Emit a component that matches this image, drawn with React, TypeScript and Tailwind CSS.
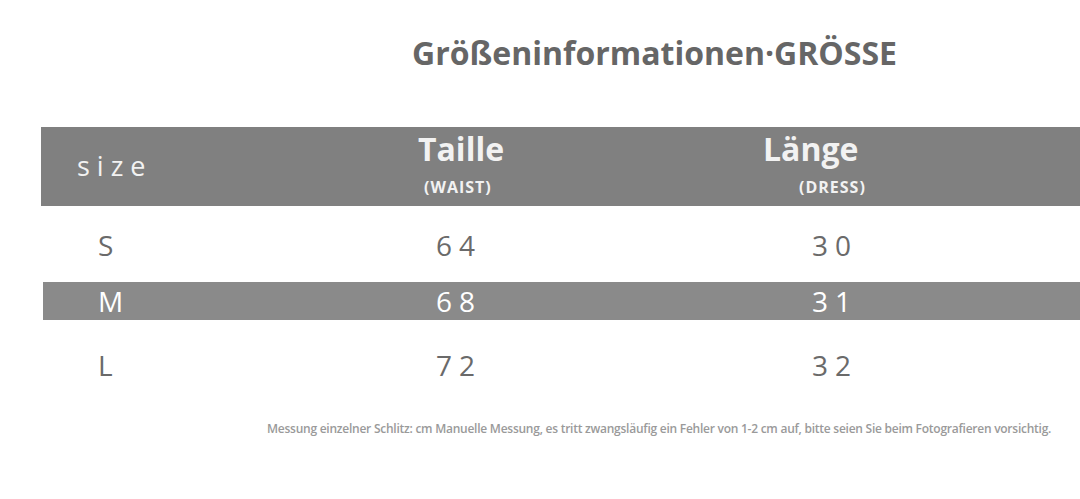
import React from 'react';

// Size chart rows
const rows = [
  { size: 'S', waist: '64', length: '30', highlight: false, gap: 'mt-[20px]' },
  { size: 'M', waist: '68', length: '31', highlight: true, gap: 'mt-[18px]' },
  { size: 'L', waist: '72', length: '32', highlight: false, gap: 'mt-[26px]' },
];

const App: React.FC = () => {
  return (
    <div className="w-[1080px] h-[499px] bg-white overflow-hidden font-['Open_Sans',sans-serif]">
      <h1 className="pt-[31px] pl-[412px] text-[32px] font-bold text-[#666666] leading-[44px] whitespace-nowrap">
        Größeninformationen·GRÖSSE
      </h1>

      {/* header band */}
      <div className="mt-[52px] ml-[41px] h-[79px] bg-[#808080] flex text-[#f2f2f2]">
        <div className="w-[320px] pl-[36px] flex items-center">
          <span className="text-[27px] tracking-[7px] pb-[1px]">size</span>
        </div>
        <div className="w-[344px] flex flex-col pl-[57px] pt-[1px]">
          <span className="text-[32px] font-bold leading-[42px]">Taille</span>
          <span className="mt-[7px] text-[16px] font-bold leading-[20px] pl-[6px] tracking-[1px]">(WAIST)</span>
        </div>
        <div className="flex flex-col pl-[58px] pt-[1px]">
          <span className="text-[32px] font-bold leading-[42px]">Länge</span>
          <span className="mt-[7px] text-[16px] font-bold leading-[20px] pl-[36px] tracking-[1px]">(DRESS)</span>
        </div>
      </div>

      {/* rows */}
      <div className="ml-[43px] flex flex-col">
        {rows.map((r) => (
          <div
            key={r.size}
            className={
              r.highlight
                ? `${r.gap} h-[38px] bg-[#8a8a8a] text-white flex items-center`
                : `${r.gap} h-[38px] text-[#6a6a6a] flex items-center`
            }
          >
            <span className="w-[393px] pl-[55px] text-[28px]">{r.size}</span>
            <span className="w-[376px] text-[28px] tracking-[7px]">{r.waist}</span>
            <span className="text-[28px] tracking-[7px]">{r.length}</span>
          </div>
        ))}
      </div>

      <p className="mt-[37px] pl-[267px] text-[12px] leading-[16px] font-semibold text-[#9a9a9a] whitespace-nowrap tracking-[-0.25px]">
        Messung einzelner Schlitz: cm Manuelle Messung, es tritt zwangsläufig ein Fehler von 1-2 cm auf, bitte seien Sie beim Fotografieren vorsichtig.
      </p>
    </div>
  );
};

export default App;
